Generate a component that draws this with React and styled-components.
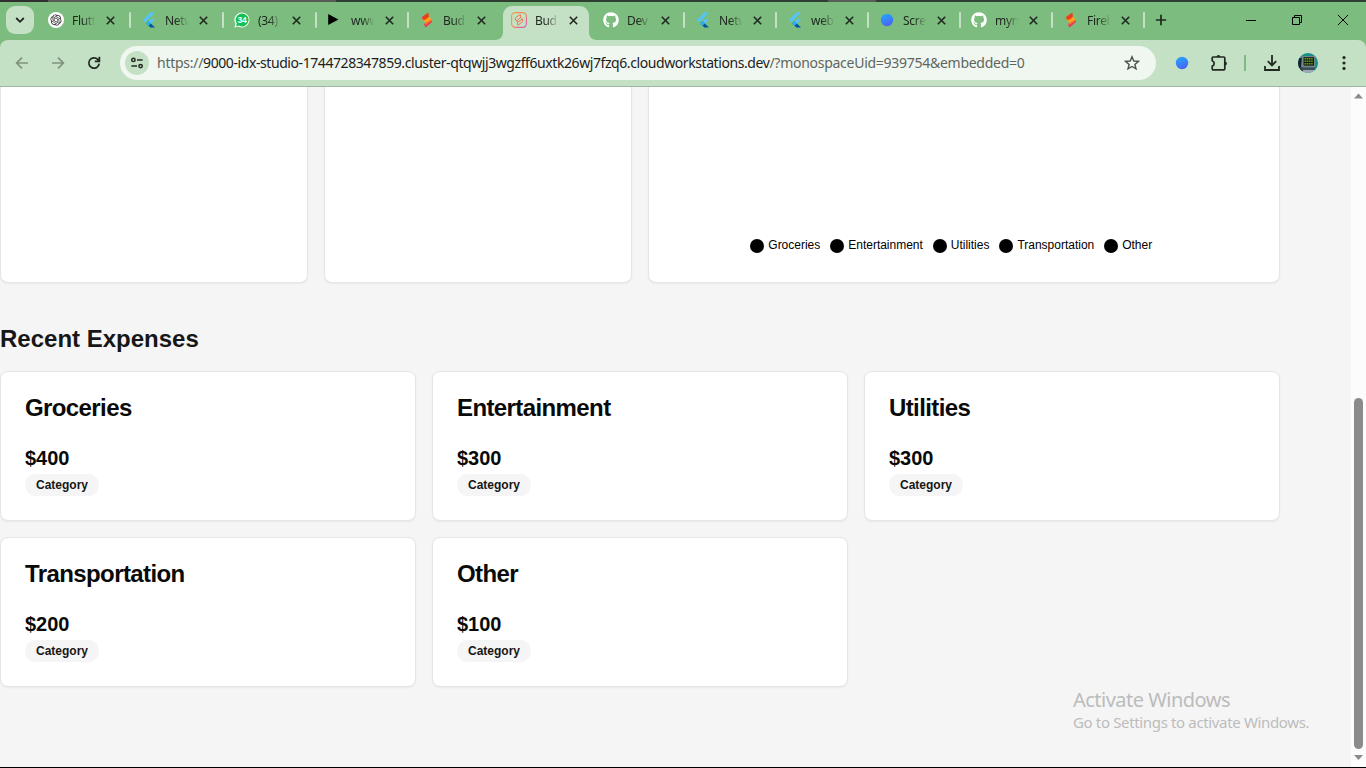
import React from "react";
import styled, { createGlobalStyle } from "styled-components";
import { FaGithub } from "react-icons/fa";
import { RiOpenaiFill } from "react-icons/ri";

const ui = '"Noto Sans", "Open Sans", sans-serif';

const GlobalStyle = createGlobalStyle`
  * { box-sizing: border-box; }
  body { margin: 0; overflow: hidden; font-family: "Liberation Sans", Arial, sans-serif; color: #0a0a0a; }
  h2, h3, p { margin: 0; }
  svg { display: block; flex: none; }
`;

const Window = styled.div`
  width: 1366px;
  height: 768px;
  display: flex;
  flex-direction: column;
  overflow: hidden;
  background: #f5f5f5;
  border-bottom: 1px solid #000;
`;

const TopEdge = styled.div`
  height: 2px;
  flex: none;
  display: flex;
  background: #2e3e30;
`;
const EdgePiece = styled.div`
  width: ${(p) => p.$w}px;
  background: ${(p) => p.$c};
`;

const TabStrip = styled.div`
  height: 38px;
  flex: none;
  display: flex;
  align-items: flex-start;
  background: #7cbc7e;
`;

const TabSearch = styled.div`
  width: 28px;
  height: 28px;
  margin: 4px 3px 0 6px;
  border-radius: 9px;
  background: #c5e1c5;
  display: flex;
  align-items: center;
  justify-content: center;
`;

const Tab = styled.div`
  position: relative;
  width: ${(p) => (p.$wide ? 93 : 92)}px;
  height: 38px;
  flex: none;
  display: flex;
  align-items: center;
  padding: 0 0 2px 11px;
  z-index: ${(p) => (p.$active ? 1 : 0)};
`;
const ActiveShape = styled.svg`
  position: absolute;
  left: -5px;
  top: 4px;
  z-index: -1;
`;
const Favicon = styled.div`
  width: 16px;
  height: 16px;
  flex: none;
  display: flex;
  align-items: center;
  justify-content: center;
`;
const TabTitle = styled.div`
  width: 24px;
  flex: none;
  margin: 2px 0 0 8px;
  font: 12px/16px ${ui};
  letter-spacing: -0.3px;
  white-space: nowrap;
  color: #202820;
  mask-image: linear-gradient(90deg, #000 45%, transparent 98%);
`;
const TabClose = styled.div`
  margin-left: 10px;
`;
const Separator = styled.div`
  position: absolute;
  right: -1px;
  top: 10px;
  width: 2px;
  height: 16px;
  border-radius: 1px;
  background: #c5e1c5;
`;
const NewTab = styled.div`
  margin: 12px 0 0 11px;
`;
const WindowButtons = styled.div`
  margin-left: auto;
  height: 36px;
  display: flex;
`;
const WindowButton = styled.div`
  width: 46px;
  display: flex;
  align-items: center;
  justify-content: center;
`;

const ToolbarBack = styled.div`
  flex: none;
  background: #7cbc7e;
`;
const Toolbar = styled.div`
  height: 47px;
  display: flex;
  align-items: center;
  padding: 0 12px 1px;
  background: #c5e1c5;
  border-bottom: 1px solid #9fb69f;
  border-radius: 8px 8px 0 0;
`;
const NavButton = styled.div`
  width: ${(p) => p.$w || 36}px;
  flex: none;
  display: flex;
  justify-content: center;
  opacity: ${(p) => (p.$off ? 0.42 : 1)};
`;
const AddressBar = styled.div`
  width: 1036px;
  height: 34px;
  flex: none;
  display: flex;
  align-items: center;
  padding: 0 16px 0 5px;
  border-radius: 17px;
  background: #f0f7f0;
`;
const SiteInfo = styled.div`
  width: 24px;
  height: 24px;
  border-radius: 50%;
  background: #c5e1c5;
  display: flex;
  align-items: center;
  justify-content: center;
`;
const Url = styled.div`
  flex: 1;
  margin-left: 8px;
  font: 14px/20px ${ui};
  letter-spacing: -0.27px;
  white-space: nowrap;
  color: #5f665f;
`;
const Host = styled.span`
  color: #1c211c;
  letter-spacing: -0.42px;
`;
const ToolDivider = styled.div`
  width: 2px;
  height: 16px;
  background: #7cbc7e;
`;

const Viewport = styled.div`
  flex: 1;
  min-height: 0;
  display: flex;
`;
const Page = styled.main`
  width: 1280px;
  flex: none;
`;
const Card = styled.section`
  background: #fff;
  border: 1px solid #e5e5e5;
  border-radius: 8px;
  box-shadow: 0 1px 2px rgba(0, 0, 0, 0.05);
`;
const SummaryRow = styled.div`
  display: grid;
  grid-template-columns: 308px 308px 632px;
  gap: 16px;
  height: 196px;
`;
const SummaryCard = styled(Card)`
  border-top: 0;
  border-radius: 0 0 8px 8px;
  display: flex;
  align-items: flex-end;
  justify-content: center;
`;
const Legend = styled.div`
  display: flex;
  gap: 10px;
  margin: 0 0 28px -25.5px;
`;
const LegendItem = styled.div`
  display: flex;
  align-items: center;
  gap: 4px;
  font-size: 12px;
  line-height: 18px;
  letter-spacing: -0.01px;
  color: #000;
`;
const LegendDot = styled.i`
  width: 14px;
  height: 14px;
  margin-top: 2px;
  border-radius: 50%;
  background: #000;
`;
const Heading = styled.h2`
  margin: 40px 0 16px;
  font-size: 24px;
  line-height: 32px;
  color: #171717;
`;
const ExpenseGrid = styled.div`
  display: grid;
  grid-template-columns: repeat(3, 416px);
  gap: 16px;
`;
const ExpenseCard = styled(Card)`
  height: 150px;
  padding: 24px;
  display: flex;
  flex-direction: column;
  align-items: flex-start;
`;
const ExpenseTitle = styled.h3`
  font-size: 24px;
  line-height: 24px;
  letter-spacing: -0.6px;
`;
const Amount = styled.p`
  margin-top: 24px;
  font-size: 20px;
  line-height: 28px;
  font-weight: 600;
`;
const Badge = styled.span`
  margin-top: 2px;
  height: 22px;
  padding: 0 11px;
  border-radius: 11px;
  background: #f5f5f5;
  font-size: 12px;
  line-height: 22px;
  font-weight: 600;
  color: #171717;
`;

const Scrollbar = styled.div`
  width: 15px;
  margin-left: auto;
  padding: 6px 0 7px;
  background: #fcfcfc;
  display: flex;
  flex-direction: column;
  align-items: center;
`;
const Thumb = styled.div`
  width: 9px;
  height: 351px;
  margin: auto 0 6px;
  border-radius: 5px;
  background: #8b8b8b;
`;

const Watermark = styled.div`
  position: absolute;
  left: 1073px;
  top: 687px;
  font-family: ${ui};
  color: #bcbcbc;
  white-space: nowrap;
`;
const WatermarkTitle = styled.div`
  font-size: 20px;
  line-height: 26px;
  letter-spacing: -0.52px;
`;
const WatermarkText = styled.div`
  margin-top: -1px;
  font-size: 15px;
  line-height: 20px;
  letter-spacing: -0.35px;
`;

const Flutter = () => (
  <svg width="14" height="16" viewBox="0 0 14 16">
    <path d="M8.6 0.5H13L3.1 10.3L0.8 8Z" fill="#54c5f8" />
    <path d="M8.6 7.3H13L8.8 11.5L6.5 9.4Z" fill="#54c5f8" />
    <path d="M4.3 11.5L6.5 9.3L13 15.5H8.4Z" fill="#01579b" />
    <path d="M4.3 11.5L6.5 9.3L8.8 11.5L6.5 13.7Z" fill="#29b6f6" />
  </svg>
);

const OpenAi = () => (
  <svg width="16" height="16" viewBox="0 0 16 16">
    <circle cx="8" cy="8" r="8" fill="#fff" />
    <RiOpenaiFill x="1.3" y="1.3" size={13.4} color="#222" />
  </svg>
);

const WhatsApp = () => (
  <svg width="16" height="16" viewBox="0 0 17 17">
    <path d="M8.5.4a8 8 0 1 1-3.8 15.1L.4 16.6l1.2-4.1A8 8 0 0 1 8.5.4Z" fill="#fff" />
    <path d="M8.6 1.5a6.9 6.9 0 1 1-3.4 12.9l-3 .7.8-2.8A6.9 6.9 0 0 1 8.6 1.5Z" fill="#12c152" />
    <text x="8.6" y="11.6" textAnchor="middle" fontFamily="Liberation Sans, sans-serif" fontSize="9" fontWeight="700" fill="#fff">34</text>
  </svg>
);

const Play = () => (
  <svg width="16" height="16" viewBox="0 0 16 16">
    <path d="M1.2 2L11.4 7.5L1.2 13Z" fill="#000" />
  </svg>
);

const Studio = () => (
  <svg width="16" height="16" viewBox="0 0 16 16">
    <path d="M9.4 .5L9.9 5.1L5 9.2L3.2 7V4.8Z" fill="#ee3d1c" />
    <path d="M3.2 7L5.2 9.6L6.6 11L12.8 7.6L9.9 5L6 7.9Z" fill="#ffa51a" />
    <path d="M12.9 7.5L12.8 10.2L6.4 15.4L5 12.4L6.2 11.2Z" fill="#f4325a" />
    <path d="M6 11.4L12.9 7.4L12.8 8.8L6 12.9Z" fill="#fb7a20" />
  </svg>
);

const StudioOutline = () => (
  <svg width="16" height="16" viewBox="0 0 16 16" fill="none">
    <defs>
      <linearGradient id="studioEdge" x1="0" y1="0" x2="1" y2="1">
        <stop offset="0" stopColor="#ef9b45" />
        <stop offset=".5" stopColor="#f28a5a" />
        <stop offset="1" stopColor="#d84fc2" />
      </linearGradient>
    </defs>
    <rect x=".6" y=".6" width="14.8" height="14.8" rx="3.6" stroke="url(#studioEdge)" strokeWidth="1.1" />
    <path d="M9.3 2.5L9.6 5.5L5.8 8.8L4.3 7.2V5.8ZM9.6 5.5L11.6 7.2L6.4 10.2L4.5 7.4M11.6 7.2V9.6L6.9 13.3L6.4 10.2" stroke="#ef7450" strokeWidth=".95" strokeLinejoin="round" />
  </svg>
);

const BlueDot = ({ id }) => (
  <svg width="14" height="14" viewBox="0 0 14 14">
    <defs>
      <linearGradient id={id} x1=".3" y1="0" x2=".7" y2="1">
        <stop offset="0" stopColor="#25a4fb" />
        <stop offset="1" stopColor="#4c60f3" />
      </linearGradient>
    </defs>
    <circle cx="7" cy="7" r="6.2" fill={`url(#${id})`} />
  </svg>
);

const icons = {
  openai: <OpenAi />,
  flutter: <Flutter />,
  whatsapp: <WhatsApp />,
  play: <Play />,
  studio: <Studio />,
  outline: <StudioOutline />,
  github: <FaGithub size={16} color="#fff" />,
  dot: <BlueDot id="tabDot" />,
};

const tabs = [
  { icon: "openai", title: "Flutt", wide: true },
  { icon: "flutter", title: "Netw", wide: true },
  { icon: "whatsapp", title: "(34)", wide: true },
  { icon: "play", title: "www" },
  { icon: "studio", title: "Bud" },
  { icon: "outline", title: "Bud", active: true },
  { icon: "github", title: "Dev" },
  { icon: "flutter", title: "Netw" },
  { icon: "flutter", title: "web" },
  { icon: "dot", title: "Scre" },
  { icon: "github", title: "myn" },
  { icon: "studio", title: "Fireb" },
];

const legend = ["Groceries", "Entertainment", "Utilities", "Transportation", "Other"];

const expenses = [
  ["Groceries", "$400"],
  ["Entertainment", "$300"],
  ["Utilities", "$300"],
  ["Transportation", "$200"],
  ["Other", "$100"],
];

const CloseIcon = () => (
  <svg width="9" height="9" viewBox="0 0 9 9" stroke="#202820" strokeWidth="1.6">
    <path d="M.8 .8L8.2 8.2M8.2 .8L.8 8.2" />
  </svg>
);

const ArrowIcon = ({ flip }) => (
  <svg width="16" height="16" viewBox="0 0 16 16" fill="none" stroke="#202820" strokeWidth="1.7" transform={flip ? "scale(-1 1)" : undefined}>
    <path d="M14 8H3M8 2.6L2.6 8L8 13.4" />
  </svg>
);

const Avatar = () => (
  <svg width="20" height="20" viewBox="0 0 20 20">
    <defs>
      <clipPath id="avatarClip"><circle cx="10" cy="10" r="10" /></clipPath>
    </defs>
    <g clipPath="url(#avatarClip)">
      <rect width="20" height="20" fill="#168f8c" />
      <path d="M0 5H5V20H0Z" fill="#14202a" />
      <path d="M4 3H17L17.5 14.5H3Z" fill="#75858d" />
      <rect x="5.6" y="4.2" width="10.4" height="8.4" fill="#10180c" />
      <path d="M6.5 5.7H15M6.5 8.2H15M6.5 10.7H15" stroke="#5f9c1c" strokeWidth="1.4" strokeDasharray="1.7 .5" />
      <path d="M2 14.5H18L16 17H4Z" fill="#3f4c56" />
      <path d="M5 17H16V20H5Z" fill="#9aa9b5" />
    </g>
  </svg>
);

export default function App() {
  return (
    <Window>
      <GlobalStyle />
      <TopEdge>
        <EdgePiece $w={48} $c="#303030" />
        <EdgePiece $w={288} $c="#585a58" />
        <EdgePiece $w={492} $c="#2e3e30" />
        <EdgePiece $w={48} $c="#585f58" />
      </TopEdge>
      <TabStrip>
        <TabSearch>
          <svg width="10" height="8" viewBox="0 0 10 8" fill="none" stroke="#202820" strokeWidth="1.8">
            <path d="M1.2 2L5 5.8L8.8 2" />
          </svg>
        </TabSearch>
        {tabs.map((t, i) => (
          <Tab key={i} $active={t.active} $wide={t.wide}>
            {t.active && (
              <ActiveShape width="102" height="34" viewBox="0 0 102 34">
                <path d="M0 34C5 34 8 31 8 26V10C8 4 12 0 18 0H84C90 0 94 4 94 10V26C94 31 97 34 102 34Z" fill="#c5e1c5" />
              </ActiveShape>
            )}
            <Favicon>{icons[t.icon]}</Favicon>
            <TabTitle>{t.title}</TabTitle>
            <TabClose><CloseIcon /></TabClose>
            {!t.active && i !== 4 && <Separator />}
          </Tab>
        ))}
        <NewTab>
          <svg width="12" height="12" viewBox="0 0 12 12" stroke="#202820" strokeWidth="1.7">
            <path d="M6 .8V11.2M.8 6H11.2" />
          </svg>
        </NewTab>
        <WindowButtons>
          <WindowButton>
            <svg width="10" height="10" viewBox="0 0 10 10"><path d="M0 5.5H10" stroke="#000" /></svg>
          </WindowButton>
          <WindowButton>
            <svg width="10" height="10" viewBox="0 0 10 10" fill="none" stroke="#000">
              <path d="M.5 2.5H7.5V9.5H.5ZM2.5 2.5V.5H9.5V7.5H7.5" />
            </svg>
          </WindowButton>
          <WindowButton>
            <svg width="10" height="10" viewBox="0 0 10 10" stroke="#000"><path d="M0 0L10 10M10 0L0 10" /></svg>
          </WindowButton>
        </WindowButtons>
      </TabStrip>

      <ToolbarBack>
        <Toolbar>
          <NavButton $off $w={20}><ArrowIcon /></NavButton>
          <NavButton $off $w={52}><ArrowIcon flip /></NavButton>
          <NavButton $w={20}>
            <svg width="16" height="16" viewBox="0 0 16 16" fill="none" stroke="#202820" strokeWidth="1.7">
              <path d="M13.2 8.6A5.2 5.2 0 1 1 11.8 4.4L13.4 6.1M13.4 1.7V6.3H8.8" />
            </svg>
          </NavButton>
          <NavButton $w={16} />
          <AddressBar>
            <SiteInfo>
              <svg width="14" height="14" viewBox="0 0 14 14" fill="none" stroke="#202820" strokeWidth="1.5">
                <circle cx="3.4" cy="3.9" r="1.7" />
                <path d="M7 3.9H12.6M1.4 10.1H7" />
                <circle cx="10.6" cy="10.1" r="1.7" />
              </svg>
            </SiteInfo>
            <Url>
              https://<Host>9000-idx-studio-1744728347859.cluster-qtqwjj3wgzff6uxtk26wj7fzq6.cloudworkstations.dev</Host>/?monospaceUid=939754&amp;embedded=0
            </Url>
            <svg width="16" height="16" viewBox="0 0 16 16" fill="none" stroke="#4a524a" strokeWidth="1.4">
              <path d="M8 1.8L9.8 6L14.4 6.4L10.9 9.4L12 13.9L8 11.5L4 13.9L5.1 9.4L1.6 6.4L6.2 6Z" />
            </svg>
          </AddressBar>
          <NavButton $w={52}><BlueDot id="barDot" /></NavButton>
          <NavButton $w={21}>
            <svg width="18" height="18" viewBox="0 0 18 18" fill="none" stroke="#202820" strokeWidth="1.7" strokeLinejoin="round">
              <path d="M3 3H13.8Q14.8 3 14.8 4V14.8Q14.8 15.8 13.8 15.8H3Q2.2 15.8 2.2 14.8V12A2.7 2.7 0 0 0 2.2 6.8V4Q2.2 3 3 3Z" />
              <path d="M6.6 3A1.9 1.9 0 0 1 10.4 3ZM15 7.5A1.9 1.9 0 0 1 15 11.3Z" fill="#202820" stroke="none" />
            </svg>
          </NavButton>
          <NavButton $w={32}><ToolDivider /></NavButton>
          <NavButton $w={22}>
            <svg width="16" height="16" viewBox="0 0 16 16" fill="none" stroke="#202820" strokeWidth="1.8">
              <path d="M8 0V10M3.8 6.2L8 10.4L12.2 6.2M1 11V15H15V11" />
            </svg>
          </NavButton>
          <NavButton $w={50}><Avatar /></NavButton>
          <NavButton $w={22}>
            <svg width="4" height="16" viewBox="0 0 4 16" fill="#202820">
              <circle cx="2" cy="2.6" r="1.6" /><circle cx="2" cy="8" r="1.6" /><circle cx="2" cy="13.4" r="1.6" />
            </svg>
          </NavButton>
        </Toolbar>
      </ToolbarBack>

      <Viewport>
        <Page>
          <SummaryRow>
            <SummaryCard />
            <SummaryCard />
            <SummaryCard>
              <Legend>
                {legend.map((name) => (
                  <LegendItem key={name}><LegendDot />{name}</LegendItem>
                ))}
              </Legend>
            </SummaryCard>
          </SummaryRow>
          <Heading>Recent Expenses</Heading>
          <ExpenseGrid>
            {expenses.map(([name, amount]) => (
              <ExpenseCard key={name}>
                <ExpenseTitle>{name}</ExpenseTitle>
                <Amount>{amount}</Amount>
                <Badge>Category</Badge>
              </ExpenseCard>
            ))}
          </ExpenseGrid>
        </Page>
        <Scrollbar>
          <svg width="9" height="6" viewBox="0 0 9 6"><path d="M0 5.5L4.5 .5L9 5.5Z" fill="#8b8b8b" /></svg>
          <Thumb />
          <svg width="9" height="5" viewBox="0 0 9 5"><path d="M0 0L4.5 5L9 0Z" fill="#8b8b8b" /></svg>
        </Scrollbar>
      </Viewport>

      <Watermark>
        <WatermarkTitle>Activate Windows</WatermarkTitle>
        <WatermarkText>Go to Settings to activate Windows.</WatermarkText>
      </Watermark>
    </Window>
  );
}
